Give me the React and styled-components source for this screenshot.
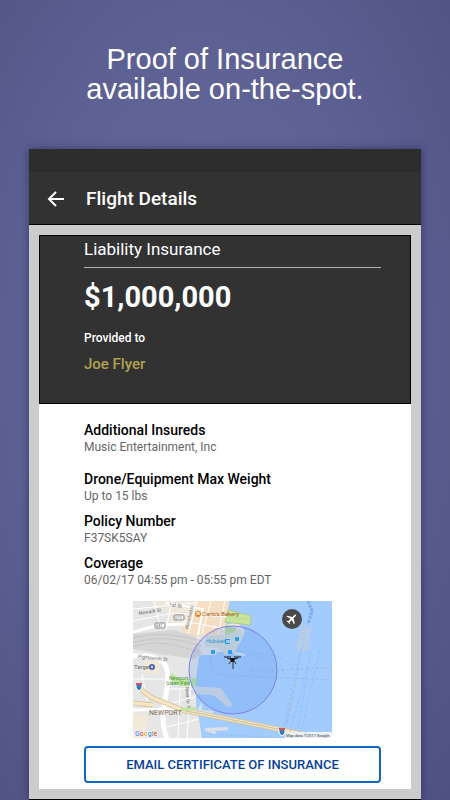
import React from 'react';
import styled, { createGlobalStyle } from 'styled-components';

const GlobalStyle = createGlobalStyle`
  * {
    box-sizing: border-box;
  }
  body {
    margin: 0;
    background: #5b5d90;
    font-family: Roboto, "Liberation Sans", sans-serif;
  }
  h1, h2, h3, p, dl, dt, dd {
    margin: 0;
  }
`;

const details = [
  { label: 'Additional Insureds', value: 'Music Entertainment, Inc', wide: true },
  { label: 'Drone/Equipment Max Weight', value: 'Up to 15 lbs' },
  { label: 'Policy Number', value: 'F37SK5SAY' },
  { label: 'Coverage', value: '06/02/17 04:55 pm - 05:55 pm EDT' },
];

const CoverageMap = () => (
  <Map viewBox="0 0 199 137" role="img" aria-label="Coverage area map">
    {/* water and land */}
    <rect width="199" height="137" fill="#a2cbfe" />
    <path d="M0 0H96L93 24L104 21L112 30L108 40L100 51H84L82 54H68L66 56L63 77V105L66 118L69 137H0Z" fill="#e6e6e6" />
    <path d="M64 0H96L93 24L88 34L60 35L48 30Z" fill="#f5dfc4" />
    <path d="M22 0H64L58 27L40 25L34 9L22 7Z" fill="#eee7dc" />
    <path d="M0 33L40 29L62 35L69 54L61 58L34 54L0 48Z" fill="#d5d5d5" />
    <path d="M0 37C20 31 42 33 69 40M0 42C25 34 44 38 69 45M0 46C24 38 44 44 66 51" fill="none" stroke="#c6c6c6" strokeWidth="1" />
    <path d="M12 59L27 62L26 73L10 71Z" fill="#f3e9d8" />
    <path d="M0 113L15 115L11 137H0Z" fill="#f3e9d8" />
    <path d="M92 24L104 27L99 36L92 34Z" fill="#b9da9d" />
    <path d="M95 9L118 15L117 24L92 21Z" fill="#c9e49c" stroke="#b4cc84" />
    <path d="M94 15L117 19" stroke="#b1c982" strokeDasharray="1 1" />
    <path d="M73 35L96 33L106 28L110 33L102 51L92 54L86 47L72 46Z" fill="#d9dcd8" />
    <path d="M102 51L112 53V55L101 53Z" fill="#e6e6e6" />
    <path d="M37 72L48 78L64 77L63 85L47 85L39 81Z" fill="#b9e49b" />
    <path d="M58 85L88 87L100 105L95 106L80 94L58 93Z" fill="#d5dce4" />
    <path d="M65 108L69 101V109L80 110V113L66 112Z" fill="#d9e0e6" />
    <path d="M72 127L95 126V129L82 130L84 134L72 130Z" fill="#d9e0e6" />

    {/* streets */}
    <g fill="none" stroke="#fff">
      <path d="M0 20L40 12L94 16M21 0L28 28M39 0L33 28M64 0L55 33M78 0L69 33M92 0L85 34M0 8L62 2M45 19L92 28" strokeWidth="1" />
      <path d="M33 2L70 8L65 34" strokeWidth="2" />
      <path d="M0 31L26 24L52 23" strokeWidth="3" />
      <path d="M0 55Q19 54 29 60Q37 67 34 86L31 107Q28 123 34 137" strokeWidth="5" />
      <path d="M0 78H35M36 88H62M35 103L62 96M34 126L66 118M47 88L45 137M58 78L54 137M9 74L14 99" strokeWidth="1" />
      <path d="M0 109L48 108" strokeWidth="3" />
    </g>
    <g fill="none">
      <path d="M0 102L20 104M8 88Q16 97 30 101L52 110L70 113L150 129L174 134" stroke="#d6c8a4" strokeWidth="5" />
      <path d="M0 102L20 104M8 88Q16 97 30 101L52 110L70 113L150 129L174 134" stroke="#f6e7c3" strokeWidth="3" />
      <path d="M52 110L70 113L150 129" stroke="#c9bda0" />
    </g>
    <path d="M47 107L62 106L64 110H48Z" fill="#c7e2a5" />

    {/* ferry lines */}
    <g fill="none" stroke="#8fb9f0" strokeDasharray="3 2" strokeOpacity="0.7">
      <path d="M108 50L138 54Q153 56 160 68M114 54L136 58Q150 61 152 75M169 43L151 125M174 66L157 132M187 50L168 130M178 50L165 128M77 133L145 137" />
    </g>
    <path d="M78 54Q76 71 86 74L199 79M118 70L199 67" fill="none" stroke="#99b3d2" strokeDasharray="3 2" strokeOpacity="0.7" />
    <path d="M171 24L165 70L153 125" fill="none" stroke="#aab6c5" strokeDasharray="4 2" />
    <path d="M175 0L179 10L175 23" fill="none" stroke="#7eacea" strokeWidth="3" strokeDasharray="3 1" />
    <path d="M171 24L166 49M176 26L172 49" fill="none" stroke="#c6cdd5" strokeWidth="4" strokeDasharray="2 1" />

    <circle cx="100" cy="69" r="44" fill="#518ae5" fillOpacity="0.2" stroke="#817fe2" />

    {/* road signs and stations */}
    <g fill="#fff" stroke="#858585">
      <rect x="41" y="14" width="10" height="5" rx="1" />
      <rect x="22" y="22" width="10" height="5" rx="1" />
    </g>
    <g fill="#249df0">
      <rect x="92" y="38" width="5" height="5" />
      <rect x="78" y="49" width="4" height="4" rx="1" />
      <rect x="95" y="49" width="4" height="4" rx="1" />
      <rect x="102" y="36" width="4" height="4" rx="1" />
    </g>
    <path d="M94 39V42M96 39V42" stroke="#fff" />
    <g stroke="#fff">
      <path d="M3 83H9V86Q9 88 6 90Q3 88 3 86Z" fill="#397bb8" />
      <path d="M146 128H152V131Q152 133 149 135Q146 133 146 131Z" fill="#397bb8" />
    </g>
    <path d="M3 83H9M146 128H152" stroke="#cf5567" strokeWidth="2" />

    <g fontFamily="Roboto, sans-serif" fontSize="5" fill="#686868">
      <text x="6" y="14" transform="rotate(-9 6 14)">Newark St</text>
      <text x="36" y="5" transform="rotate(8 36 5)">1st St</text>
      <text x="55" y="28" transform="rotate(-76 55 28)" fontSize="4">Bloomfield St</text>
      <text x="5" y="57" transform="rotate(7 5 57)">Eighteenth St</text>
      <text x="52" y="86" transform="rotate(84 52 86)">River Dr S</text>
      <text x="42" y="18" fontSize="4">673</text>
      <text x="23" y="26" fontSize="4">681</text>
      <text x="1" y="68" fontSize="6">Target</text>
      <text x="69" y="15" fontSize="6" fill="#a45c27">Carlo's Bakery</text>
      <text x="73" y="42" fill="#2995d3">Hoboken</text>
      <text x="36" y="79" fontSize="5" fill="#4c9249">Newport</text>
      <text x="33" y="84" fontSize="5" fill="#4c9249">Green Park</text>
      <text x="16" y="114" fontSize="7" fill="#806b58">NEWPORT</text>
    </g>
    <circle cx="65" cy="13" r="3" fill="#ef7d22" />
    <path d="M64 11V14M66 11V14M64 12H66" stroke="#fff" />
    <circle cx="19" cy="66" r="3" fill="#4967c5" />
    <circle cx="19" cy="66" r="1" fill="#fff" />

    {/* drone marker */}
    <path d="M91 56H98M101 56H108M94 57L99 59L105 57" fill="none" stroke="#111" strokeWidth="1" />
    <path d="M97 57H102L101 61H98Z" fill="#111" />
    <path d="M98 60L96 63M101 60L103 63M100 60V68" stroke="#333" />

    {/* plane badge */}
    <circle cx="159" cy="18" r="10" fill="#4a4a4a" />
    <g transform="translate(159 18) rotate(45) scale(0.56) translate(-12 -12)">
      <path d="M21 16V14L13 9V3.5A1.5 1.5 0 0 0 10 3.5V9L2 14V16L10 13.5V19L8 20.5V22L11.5 21L15 22V20.5L13 19V13.5Z" fill="#fff" />
    </g>

    <text x="2" y="135" fontFamily="Roboto, sans-serif" fontSize="7" fontWeight="500" stroke="#fff" strokeWidth="1" paintOrder="stroke">
      <tspan fill="#4285f4">G</tspan>
      <tspan fill="#ea4335">o</tspan>
      <tspan fill="#e8ad08">o</tspan>
      <tspan fill="#4285f4">g</tspan>
      <tspan fill="#34a853">l</tspan>
      <tspan fill="#ea4335">e</tspan>
    </text>
    <rect x="152" y="131" width="47" height="6" fill="#edf2f8" />
    <text x="153" y="136" fontFamily="Roboto, sans-serif" fontSize="4" fill="#333">Map data ©2017 Google</text>
  </Map>
);

const App = () => {
  return (
    <>
      <GlobalStyle />
      <Page>
        <Headline>
          Proof of Insurance
          <br />
          available on-the-spot.
        </Headline>
        <Phone>
          <StatusBar />
          <Toolbar>
            <BackButton type="button" aria-label="Back">
              <svg width="24" height="24" viewBox="0 0 24 24">
                <path d="M20 12H5M12 5L5 12L12 19" fill="none" stroke="#fff" strokeWidth="2" />
              </svg>
            </BackButton>
            <Title>Flight Details</Title>
          </Toolbar>
          <Screen>
            <Summary>
              <PolicyType>Liability Insurance</PolicyType>
              <Amount>$1,000,000</Amount>
              <Provided>Provided to</Provided>
              <Insured>Joe Flyer</Insured>
            </Summary>
            <Body>
              <Details>
                {details.map((item) => (
                  <Detail key={item.label} $wide={item.wide}>
                    <dt>{item.label}</dt>
                    <dd>{item.value}</dd>
                  </Detail>
                ))}
              </Details>
              <CoverageMap />
              <EmailButton type="button">EMAIL CERTIFICATE OF INSURANCE</EmailButton>
            </Body>
          </Screen>
        </Phone>
      </Page>
    </>
  );
};

const Page = styled.main`
  min-height: 100vh;
  padding: 44px 29px 0;
  background: radial-gradient(ellipse at 45% 45%, #666a9e 0%, #5e6194 50%, #4f5181 100%);
`;

const Headline = styled.h1`
  color: #fff;
  font-family: "Liberation Sans", Arial, sans-serif;
  font-size: 29px;
  font-weight: 400;
  line-height: 30px;
  text-align: center;
`;

const Phone = styled.section`
  margin-top: 45px;
  border-bottom: 1px solid #000;
  background: #ccc;
  box-shadow: 0 0 8px rgba(20, 20, 60, 0.5);
`;

const StatusBar = styled.div`
  height: 23px;
  background: #2d2d2d;
`;

const Toolbar = styled.header`
  display: flex;
  align-items: center;
  gap: 18px;
  height: 53px;
  padding: 1px 15px 0;
  border-bottom: 1px solid #000;
  background: #323232;
`;

const BackButton = styled.button`
  display: flex;
  padding: 0;
  border: 0;
  background: none;
  cursor: pointer;
`;

const Title = styled.h2`
  color: #fff;
  font-size: 19px;
  font-weight: 500;
  line-height: 24px;
`;

const Screen = styled.div`
  padding: 10px;
`;

const Summary = styled.section`
  height: 169px;
  padding: 1px 29px 0 44px;
  border: 1px solid #000;
  background: #323232;
  color: #fff;
`;

const PolicyType = styled.h3`
  padding-bottom: 6px;
  border-bottom: 1px solid #aeb2b1;
  font-size: 17px;
  font-weight: 400;
  line-height: 24px;
`;

const Amount = styled.p`
  margin-top: 11px;
  font-size: 29px;
  font-weight: 700;
  line-height: 36px;
`;

const Provided = styled.p`
  margin-top: 15px;
  font-size: 12px;
  font-weight: 500;
  line-height: 16px;
`;

const Insured = styled.p`
  margin-top: 8px;
  color: #afa351;
  font-size: 15px;
  font-weight: 500;
  line-height: 20px;
`;

const Body = styled.section`
  padding: 17px 30px 6px 45px;
  background: #fff;
`;

const Details = styled.dl`
  display: flex;
  flex-direction: column;
`;

const Detail = styled.div`
  padding-bottom: ${({ $wide }) => ($wide ? '14px' : '7px')};

  dt {
    color: #000;
    font-size: 14px;
    font-weight: 500;
    line-height: 18px;
  }
  dd {
    color: #666;
    font-size: 12px;
    line-height: 17px;
  }
`;

const Map = styled.svg`
  display: block;
  width: 67%;
  margin: 5px auto 0;
`;

const EmailButton = styled.button`
  display: block;
  width: 100%;
  height: 37px;
  margin-top: 8px;
  padding: 0;
  border: 2px solid #1266c4;
  border-radius: 4px;
  background: #fff;
  color: #063f9b;
  font-family: inherit;
  font-size: 13px;
  font-weight: 500;
  cursor: pointer;
`;

export default App;
